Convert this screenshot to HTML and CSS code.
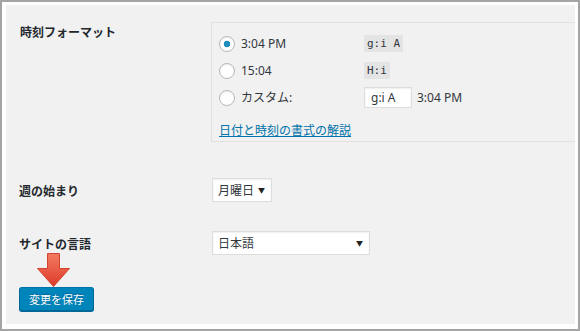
FILE: index.html
```html
<!DOCTYPE html>
<html lang="ja">
<head>
  <meta charset="UTF-8">
  <meta name="viewport" content="width=device-width, initial-scale=1.0">
  <title>一般設定</title>
  <link rel="stylesheet" href="styles.css">
</head>
<body>

  <div class="frame">
    <div class="panel">

      <div class="row row-top">
        <div class="row-label">時刻フォーマット</div>
        <fieldset class="format-box">
          <label class="radio-row">
            <input type="radio" name="time_format" checked>
            <span class="radio-text">3:04 PM</span>
            <code>g:i A</code>
          </label>
          <label class="radio-row">
            <input type="radio" name="time_format">
            <span class="radio-text">15:04</span>
            <code>H:i</code>
          </label>
          <label class="radio-row">
            <input type="radio" name="time_format">
            <span class="radio-text">カスタム:</span>
            <input type="text" class="custom-input" value="g:i A">
            <span class="preview">3:04 PM</span>
          </label>
          <a href="#" class="help-link">日付と時刻の書式の解説</a>
        </fieldset>
      </div>

      <div class="row row-week">
        <div class="row-label">週の始まり</div>
        <div class="select-box select-short">
          <span>月曜日</span>
          <span class="select-arrow">▼</span>
        </div>
      </div>

      <div class="row row-lang">
        <div class="row-label">サイトの言語</div>
        <div class="select-box select-long">
          <span>日本語</span>
          <span class="select-arrow">▼</span>
        </div>
      </div>

      <div class="submit">
        <!-- annotation arrow pointing at the save button -->
        <svg class="pointer-arrow" width="33" height="34" viewBox="0 0 33 34">
          <defs>
            <linearGradient id="arrowFill" x1="0" y1="0" x2="0" y2="1">
              <stop offset="0" stop-color="#f47a63"/>
              <stop offset="1" stop-color="#dc3b27"/>
            </linearGradient>
          </defs>
          <polygon points="10.5,0.5 22.5,0.5 22.5,15.5 32.5,15.5 16.5,33.5 0.5,15.5 10.5,15.5"
                   fill="url(#arrowFill)" stroke="#d2432f" stroke-width="1"/>
        </svg>
        <button type="button" class="save-button">変更を保存</button>
      </div>

    </div>
  </div>

</body>
</html>
```

FILE: styles.css
```css
* {
  margin: 0;
  padding: 0;
  box-sizing: border-box;
}

body {
  font-family: 'Noto Sans', 'Noto Sans CJK JP', sans-serif;
  font-size: 12px;
  color: #32373c;
  background: #fff;
}

.frame {
  width: 580px;
  height: 331px;
  border: 2px solid #a4a4a4;
  padding: 3px 3px 5px 4px;
  background: #fff;
}

.panel {
  height: 100%;
  background: #f1f1f1;
  padding: 17px 0 0 13px;
}

.row {
  display: flex;
  align-items: center;
}

.row-top {
  align-items: flex-start;
}

.row-label {
  width: 192px;
  flex-shrink: 0;
  font-weight: bold;
  color: #23282d;
  line-height: 18px;
}

.row-top .row-label {
  padding-top: 2px;
  padding-left: 1px;
}

.format-box {
  flex: 1;
  border: 1px solid #e1e1e1;
  border-right: none;
  padding: 7px 0 1px 7px;
}

.radio-row {
  display: flex;
  align-items: center;
  height: 27px;
}

.radio-row input[type="radio"] {
  appearance: none;
  -webkit-appearance: none;
  width: 16px;
  height: 16px;
  margin-right: 6px;
  border: 1px solid #b4b9be;
  border-radius: 50%;
  background: #fff;
  box-shadow: inset 0 1px 2px rgba(0, 0, 0, 0.07);
}

.radio-row input[type="radio"]:checked {
  background: radial-gradient(circle, #1e8cbe 0 3px, #fff 3.6px);
}

.radio-text {
  width: 123px;
  line-height: 18px;
}

code {
  font-family: 'DejaVu Sans Mono', monospace;
  font-size: 11px;
  line-height: 13px;
  padding: 2px 3px;
  background: #e4e4e4;
  color: #32373c;
}

.custom-input {
  width: 48px;
  height: 21px;
  margin-right: 5px;
  padding: 0 6px;
  border: 1px solid #ddd;
  background: #fff;
  font-family: inherit;
  font-size: 12px;
  color: #32373c;
  box-shadow: inset 0 1px 2px rgba(0, 0, 0, 0.07);
  outline: none;
}

.preview {
  line-height: 18px;
}

.help-link {
  display: inline-block;
  margin-top: 11px;
  line-height: 18px;
  color: #0073aa;
  text-decoration: underline;
}

.row-week {
  margin-top: 36px;
}

.row-lang {
  margin-top: 29px;
}

.row-week .row-label,
.row-lang .row-label {
  padding-top: 3px;
}

.select-box {
  display: flex;
  align-items: center;
  justify-content: space-between;
  height: 24px;
  margin-left: 1px;
  padding: 0 6px 0 5px;
  border: 1px solid #ddd;
  background: #fff;
  color: #32373c;
  box-shadow: inset 0 1px 2px rgba(0, 0, 0, 0.07);
}

.select-short {
  width: 60px;
}

.select-long {
  width: 158px;
}

.select-arrow {
  font-size: 7px;
  color: #222;
}

.submit {
  position: relative;
  margin-top: 32px;
}

.pointer-arrow {
  position: absolute;
  left: 18px;
  bottom: 100%;
  display: block;
}

.save-button {
  height: 24px;
  padding: 0 9px 1px;
  border: 1px solid #0073aa;
  border-color: #0073aa #006799 #006799;
  border-radius: 3px;
  background: #0085ba;
  box-shadow: 0 1px 0 #006799;
  color: #fff;
  font-family: inherit;
  font-size: 11px;
  text-shadow: 0 -1px 1px #006799;
  cursor: pointer;
}
```
